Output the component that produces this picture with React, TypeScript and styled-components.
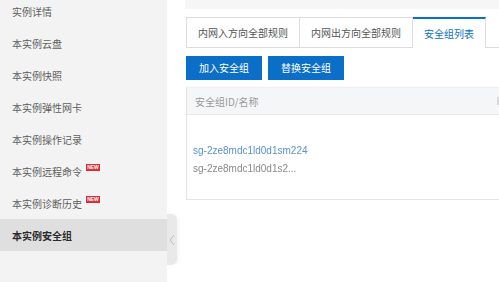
import React from "react";
import styled, { createGlobalStyle } from "styled-components";

const Global = createGlobalStyle`
  html, body { margin: 0; padding: 0; background: #fff; overflow: hidden; }
  body { font-family: "Noto Sans CJK SC", "Liberation Sans", sans-serif; }
`;

const Page = styled.div`
  display: flex;
  width: 499px;
  height: 282px;
  overflow: hidden;
  background: #fff;
`;

const Sidebar = styled.aside`
  position: relative;
  flex: 0 0 167px;
  background: #f3f3f3;
`;

const Menu = styled.ul`
  list-style: none;
  margin: -5px 0 0;
  padding: 0;
`;

const MenuItem = styled.li<{ $active?: boolean }>`
  display: flex;
  align-items: center;
  height: 32px;
  padding-left: 12px;
  font-size: 10px;
  color: ${(p) => (p.$active ? "#2b2b2b" : "#5f5f5f")};
  font-weight: ${(p) => (p.$active ? 600 : 400)};
  background: ${(p) => (p.$active ? "#dfdfdf" : "transparent")};
`;

const NewBadge = styled.span`
  display: inline-flex;
  align-items: center;
  justify-content: center;
  width: 14px;
  height: 7px;
  margin: 0 0 8px 4px;
  background: #dc2e37;
  color: #fff;
  font-family: "Liberation Sans", sans-serif;
  font-size: 5px;
  font-weight: 700;
  line-height: 1;
`;

const Handle = styled.div`
  position: absolute;
  left: 100%;
  top: 214px;
  width: 10px;
  height: 51px;
  background: #e9e9e9;
  border-radius: 0 6px 6px 0;
  box-shadow: 2px 0 3px rgba(0, 0, 0, 0.04);
  display: flex;
  align-items: center;
  justify-content: center;
`;

const Main = styled.main`
  flex: 1;
  min-width: 0;
  padding-left: 19px;
  display: flex;
  flex-direction: column;
  overflow: hidden;
`;

const TopStrip = styled.div`
  height: 9px;
  background: #f6f6f6;
  margin-left: -1px;
`;

const TabBar = styled.div`
  display: flex;
  margin-top: 8px;
  height: 30px;
  border-bottom: 1px solid #dcdcdc;
`;

const Tab = styled.div<{ $active?: boolean; $first?: boolean }>`
  display: flex;
  align-items: center;
  padding: 0 11px;
  font-size: 10px;
  color: ${(p) => (p.$active ? "#0a6fc7" : "#555")};
  background: #fff;
  border-right: 1px solid #dedede;
  border-left: ${(p) => (p.$first ? "1px solid #dedede" : "none")};
  border-top: ${(p) => (p.$active ? "2px solid #0a6fc7" : "1px solid #dedede")};
  margin-bottom: ${(p) => (p.$active ? "-1px" : "0")};
  height: ${(p) => (p.$active ? "31px" : "30px")};
  box-sizing: border-box;
  white-space: nowrap;
`;

const Toolbar = styled.div`
  display: flex;
  gap: 6px;
  margin-top: 8px;
`;

const Button = styled.button`
  height: 24px;
  padding: 0 13px;
  border: none;
  background: #0b6fc8;
  color: #fff;
  font-family: inherit;
  font-size: 10px;
  line-height: 24px;
  white-space: nowrap;
`;

const Table = styled.div`
  margin-top: 7px;
  width: 340px;
  border-left: 1px solid #e4e4e4;
  border-bottom: 1px solid #e4e4e4;
`;

const Row = styled.div<{ $head?: boolean }>`
  display: grid;
  grid-template-columns: 309px 1fr;
  height: ${(p) => (p.$head ? "26px" : "84px")};
  background: ${(p) => (p.$head ? "#f5f6f8" : "#fff")};
  border-bottom: ${(p) => (p.$head ? "1px solid #e8e8e8" : "none")};
  border-top: ${(p) => (p.$head ? "1px solid #eeeeee" : "none")};
`;

const HeadCell = styled.div`
  display: flex;
  align-items: center;
  padding-left: 8px;
  font-size: 10px;
  color: #9a9a9a;
  white-space: nowrap;
`;

const Cell = styled.div`
  display: flex;
  flex-direction: column;
  justify-content: center;
  padding-left: 6px;
  padding-top: 6px;
  font-family: "Liberation Sans", sans-serif;
  font-size: 10px;
  line-height: 18px;
  white-space: nowrap;
`;

const IdLink = styled.span`
  color: #5a92d4;
  filter: blur(0.6px);
`;

const NameText = styled.span`
  color: #8a8a8a;
  filter: blur(0.6px);
`;

const HeadMark = styled.span`
  display: block;
  width: 3px;
  height: 8px;
  margin-left: -7px;
  background: #d8d8d8;
`;

const Mark = styled.span`
  display: block;
  width: 6px;
  height: 10px;
  margin-top: -8px;
  background: #f7efcf;
`;

const menu = [
  { label: "实例详情" },
  { label: "本实例云盘" },
  { label: "本实例快照" },
  { label: "本实例弹性网卡" },
  { label: "本实例操作记录" },
  { label: "本实例远程命令", isNew: true },
  { label: "本实例诊断历史", isNew: true },
  { label: "本实例安全组", active: true },
];

export default function App() {
  return (
    <Page>
      <Global />
      <Sidebar>
        <Menu>
          {menu.map((m) => (
            <MenuItem key={m.label} $active={m.active}>
              {m.label}
              {m.isNew && <NewBadge>NEW</NewBadge>}
            </MenuItem>
          ))}
        </Menu>
        <Handle>
          <svg width="6" height="12" viewBox="0 0 6 12">
            <path d="M5 1 L1 6 L5 11" fill="none" stroke="#bdbdbd" strokeWidth="1" />
          </svg>
        </Handle>
      </Sidebar>
      <Main>
        <TopStrip />
        <TabBar>
          <Tab $first>内网入方向全部规则</Tab>
          <Tab>内网出方向全部规则</Tab>
          <Tab $active>安全组列表</Tab>
        </TabBar>
        <Toolbar>
          <Button>加入安全组</Button>
          <Button>替换安全组</Button>
        </Toolbar>
        <Table>
          <Row $head>
            <HeadCell>安全组ID/名称</HeadCell>
            <HeadCell>
              <HeadMark />
            </HeadCell>
          </Row>
          <Row>
            <Cell>
              <IdLink>sg-2ze8mdc1ld0d1sm224</IdLink>
              <NameText>sg-2ze8mdc1ld0d1s2...</NameText>
            </Cell>
            <Cell>
              <Mark />
            </Cell>
          </Row>
        </Table>
      </Main>
    </Page>
  );
}
